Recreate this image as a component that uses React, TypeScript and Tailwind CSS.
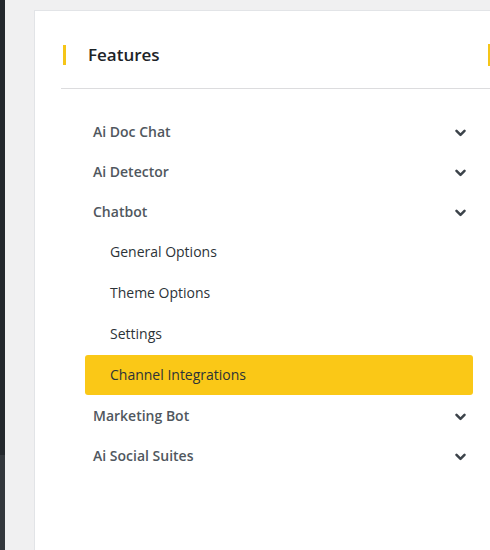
import type { ReactNode } from 'react';

const font = { fontFamily: '"Open Sans", "Liberation Sans", sans-serif' };

type Item = {
  label: string;
  children?: { label: string; active?: boolean }[];
};

const ITEMS: Item[] = [
  { label: 'Ai Doc Chat' },
  { label: 'Ai Detector' },
  {
    label: 'Chatbot',
    children: [
      { label: 'General Options' },
      { label: 'Theme Options' },
      { label: 'Settings' },
      { label: 'Channel Integrations', active: true },
    ],
  },
  { label: 'Marketing Bot' },
  { label: 'Ai Social Suites' },
];

function Chevron() {
  return (
    <svg width="11" height="8" viewBox="0 0 11 8" className="mt-[3px] shrink-0">
      <polyline
        points="1.5,1.8 5.5,5.8 9.5,1.8"
        fill="none"
        stroke="#3c434a"
        strokeWidth="2.5"
        strokeLinecap="round"
        strokeLinejoin="round"
      />
    </svg>
  );
}

function ParentRow({ children }: { children: ReactNode }) {
  return (
    <div className="flex h-[40px] items-center justify-between pl-[8px] pr-[7px] text-[14px] font-semibold text-[#50575e]">
      <span>{children}</span>
      <Chevron />
    </div>
  );
}

// Sidebar "Features" menu with the Chatbot group open
export default function App() {
  return (
    <div className="flex h-[550px] w-[490px] overflow-hidden bg-[#f0f0f1]" style={font}>
      <div className="flex w-[5px] shrink-0 flex-col">
        <div className="h-[455px] bg-[#23282d]" />
        <div className="flex-1 bg-[#32373c]" />
      </div>

      <div className="flex-1 pl-[29px] pt-[10px]">
        <div className="h-full w-[560px] border-l border-t border-[#e2e4e7] bg-white pt-[33px]">
          <div className="flex items-center pl-[28px]">
            <div className="flex w-[425px] items-center">
              <span className="h-[20px] w-[3px] bg-[#f5c518]" />
              <h2 className="ml-[22px] text-[17px] font-semibold leading-[20px] text-[#1d2327]">
                Features
              </h2>
            </div>
            <span className="h-[22px] w-[3px] bg-[#f5c518]" />
          </div>

          <div className="ml-[26px] mt-[22px] h-px bg-[#dcdcde]" />

          <nav className="ml-[50px] mt-[22px] w-[388px]">
            {ITEMS.map((item) => (
              <div key={item.label}>
                <ParentRow>{item.label}</ParentRow>
                {item.children?.map((c) =>
                  c.active ? (
                    <div
                      key={c.label}
                      className="mt-px flex h-[40px] items-center rounded-[3px] bg-[#fac817] pb-[2px] pl-[25px] text-[14px] text-[#2c3338]"
                    >
                      {c.label}
                    </div>
                  ) : (
                    <div
                      key={c.label}
                      className="flex h-[41px] items-center pl-[25px] text-[14px] text-[#2c3338]"
                    >
                      {c.label}
                    </div>
                  ),
                )}
              </div>
            ))}
          </nav>
        </div>
      </div>
    </div>
  );
}
